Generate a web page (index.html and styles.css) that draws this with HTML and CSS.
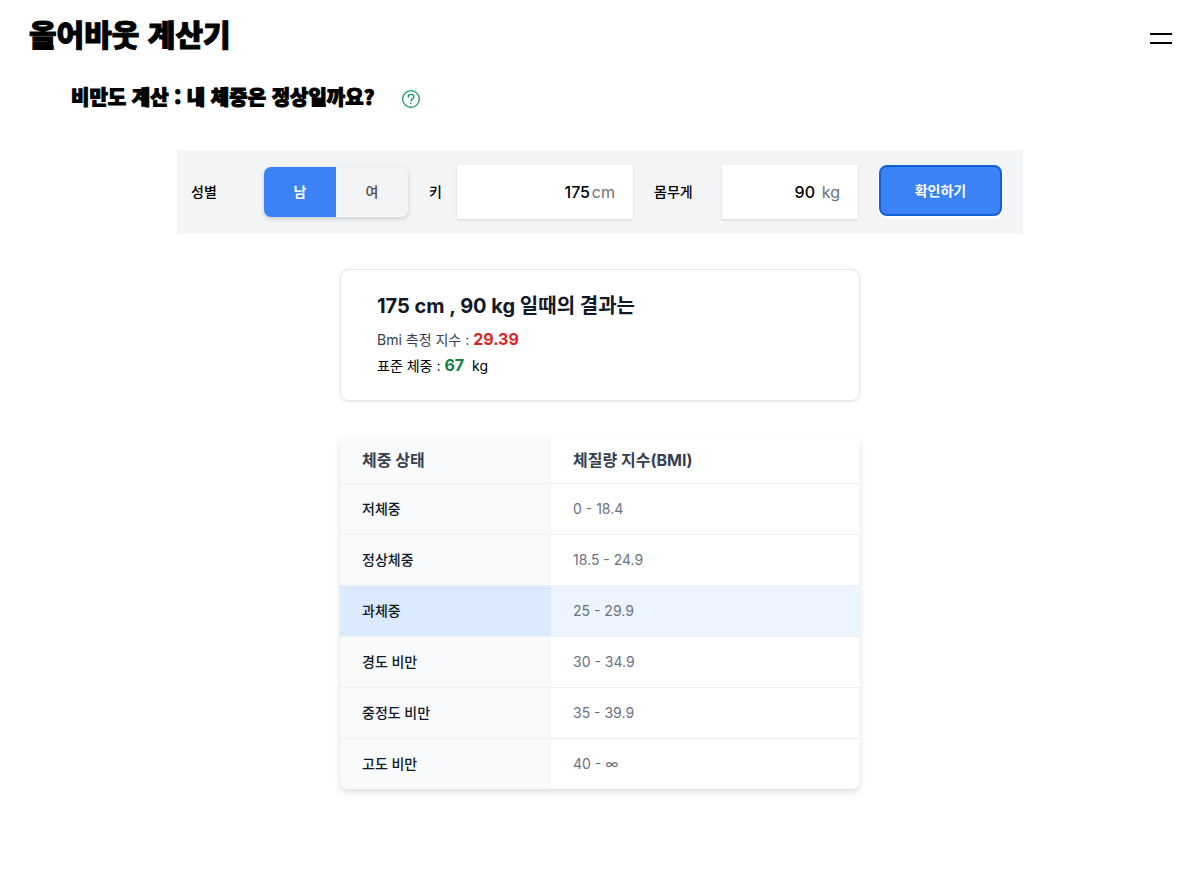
FILE: index.html
```html
<!DOCTYPE html>
<html lang="ko">
<head>
<meta charset="utf-8">
<meta name="viewport" content="width=device-width, initial-scale=1">
<title>올어바웃 계산기</title>
<link rel="stylesheet" href="styles.css">
</head>
<body>
<header class="site-header">
  <a class="brand" href="#">올어바웃 계산기</a>
  <button class="menu-button" type="button" aria-label="메뉴">
    <svg width="22" height="12" viewBox="0 0 22 12" aria-hidden="true"><path d="M0 1h22M0 10h22" stroke="#000" stroke-width="2"/></svg>
  </button>
</header>
<main>
  <div class="page-title">
    <h1>비만도 계산 : 내 체중은 정상일까요?</h1>
    <button class="help-button" type="button" aria-label="도움말">
      <svg width="20" height="20" viewBox="0 0 20 20" fill="none" stroke="#12946c" stroke-width="1.3" stroke-linecap="round" aria-hidden="true"><circle cx="10" cy="10" r="8.3"/><path d="M7.2 8C7.2 6.400 8.400 5.400 10 5.400s2.800 1 2.800 2.500c0 2-2.800 2-2.800 4.200"/><circle cx="10" cy="14.300" r=".85" fill="#12946c" stroke="none"/></svg>
    </button>
  </div>

  <form class="bmi-form">
    <span class="caption caption-gender" id="gender-label">성별</span>
    <div class="toggle" role="radiogroup" aria-labelledby="gender-label">
      <label class="option"><input type="radio" name="gender" value="m" checked><span>남</span></label>
      <label class="option"><input type="radio" name="gender" value="f"><span>여</span></label>
    </div>
    <label class="caption caption-height" for="height">키</label>
    <div class="field field-height"><input id="height" type="text" inputmode="numeric" value="175"><span class="unit">cm</span></div>
    <label class="caption caption-weight" for="weight">몸무게</label>
    <div class="field field-weight"><input id="weight" type="text" inputmode="numeric" value="90"><span class="unit">kg</span></div>
    <button class="submit" type="button">확인하기</button>
  </form>

  <section class="result">
    <h2>175 cm , 90 kg 일때의 결과는</h2>
    <p class="bmi">Bmi 측정 지수 : <strong>29.39</strong></p>
    <p class="standard">표준 체중 : <strong>67</strong> <span class="result-unit">kg</span></p>
  </section>

  <table class="ranges">
    <thead><tr><th scope="col">체중 상태</th><th scope="col">체질량 지수(BMI)</th></tr></thead>
    <tbody>
      <tr><th scope="row">저체중</th><td>0 - 18.4</td></tr>
      <tr><th scope="row">정상체중</th><td>18.5 - 24.9</td></tr>
      <tr class="current"><th scope="row">과체중</th><td>25 - 29.9</td></tr>
      <tr><th scope="row">경도 비만</th><td>30 - 34.9</td></tr>
      <tr><th scope="row">중정도 비만</th><td>35 - 39.9</td></tr>
      <tr><th scope="row">고도 비만</th><td>40 - ∞</td></tr>
    </tbody>
  </table>
</main>
</body>
</html>
```
FILE: styles.css
```css
* { box-sizing: border-box; }

body {
  margin: 0;
  background: #fff;
  color: #000;
  font-family: Inter, "Noto Sans CJK KR", sans-serif;
  font-size: 14px;
  line-height: 24px;
}

h1, h2, p { margin: 0; }
button, input { font: inherit; }
main { padding-bottom: 40px; }

.site-header {
  display: flex;
  align-items: flex-start;
  justify-content: space-between;
  padding: 13px 28px 18px 29px;
}

.brand, .page-title h1 {
  color: #000;
  font-family: "Noto Sans CJK KR", sans-serif;
  font-weight: 900;
  -webkit-text-stroke: 1px #000;
}

.brand {
  font-size: 30px;
  line-height: 40px;
  text-decoration: none;
}

.menu-button, .help-button {
  display: flex;
  padding: 0;
  border: 0;
  background: none;
  cursor: pointer;
}

.menu-button { padding-top: 20px; }

.page-title {
  display: flex;
  align-items: center;
  gap: 27px;
  padding: 12px 71px 0;
}

.page-title h1 {
  font-size: 20px;
  line-height: 28px;
}

.help-button { padding-top: 4px; }

.bmi-form {
  display: flex;
  align-items: center;
  max-width: 846px;
  margin: 39px auto 35px;
  padding: 15px 21px 15px 14px;
  background: #f3f4f6;
}

.caption {
  flex: none;
  font-weight: 500;
}

.caption-gender { width: 73px; }
.caption-height { width: 28px; }
.caption-weight { width: 68px; }

.toggle {
  display: flex;
  flex: none;
  margin-right: 21px;
  border-radius: 7px;
  box-shadow: 0 2px 5px rgba(0, 0, 0, .16);
  overflow: hidden;
}

.option {
  position: relative;
  display: flex;
  cursor: pointer;
}

.option input {
  position: absolute;
  inset: 0;
  margin: 0;
  opacity: 0;
}

.option span {
  width: 72px;
  color: #4b4b4b;
  font-weight: 500;
  line-height: 50px;
  text-align: center;
}

.option input:checked + span {
  background: #3b82f6;
  color: #fff;
  font-weight: 700;
}

.field {
  display: flex;
  align-items: center;
  min-width: 0;
  height: 54px;
  margin-right: 21px;
  padding-right: 18px;
  background: #fff;
  box-shadow: 0 1px 2px rgba(0, 0, 0, .12);
  font-size: 16px;
}

.field-height { flex: 158 1 0; }
.field-weight { flex: 118 1 0; }

.field input {
  flex: 1;
  min-width: 0;
  padding: 0;
  border: 0;
  outline: 0;
  background: none;
  font-weight: 500;
  text-align: right;
}

.unit {
  flex: none;
  width: 25px;
  color: #6b7280;
  text-align: right;
}

.submit {
  flex: none;
  width: 123px;
  height: 51px;
  margin-bottom: 3px;
  border: 2px solid #1261d2;
  border-radius: 8px;
  background: #3b82f6;
  box-shadow: 0 1px 2px 1px #fff;
  color: #fff;
  font-weight: 700;
  cursor: pointer;
}

.result, .ranges {
  width: 100%;
  max-width: 520px;
  margin: 0 auto;
}

.result {
  margin-bottom: 35px;
  padding: 20px 36px 21px;
  border: 1px solid #e5e7eb;
  border-radius: 8px;
  box-shadow: 0 1px 3px rgba(0, 0, 0, .1);
}

.result h2 {
  margin-bottom: 5px;
  color: #111827;
  font-size: 20px;
  font-weight: 700;
  line-height: 32px;
}

.result p { line-height: 26px; }
.result .bmi { color: #374151; }

.result strong {
  font-size: 16px;
  line-height: 20px;
}

.bmi strong { color: #dc2626; }
.standard strong { color: #15803d; }
.result-unit { margin-left: 4px; }

.ranges {
  border-collapse: separate;
  border-spacing: 0;
  border-radius: 8px;
  box-shadow: 0 3px 6px rgba(0, 0, 0, .13);
  overflow: hidden;
}

.ranges th, .ranges td {
  height: 51px;
  padding: 0 22px;
  border-bottom: 1px solid #edeff2;
  text-align: left;
}

.ranges th:first-child {
  width: 211px;
  background: #f9fafb;
}

.ranges thead th {
  height: 48px;
  color: #374151;
  font-size: 16px;
  font-weight: 700;
}

.ranges tbody th {
  color: #111827;
  font-weight: 500;
}

.ranges td { color: #6b7280; }

.ranges tbody tr:last-child > * {
  height: 50px;
  border-bottom: 0;
}

.ranges .current th:first-child { background: #dbeafe; }
.ranges .current td { background: #ebf4ff; }

@media (max-width: 820px) {
  .bmi-form {
    flex-wrap: wrap;
    row-gap: 12px;
  }

  .field { flex: 1 1 120px; }
  .page-title { padding-inline: 28px; }
}
```
